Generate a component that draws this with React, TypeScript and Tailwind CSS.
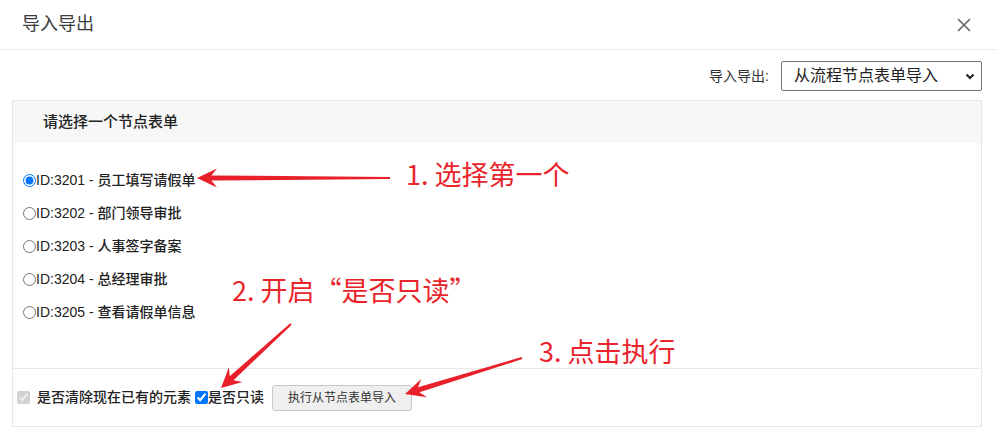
import React from 'react';

type Pt = [number, number];

// tapered annotation arrow: thin tail, swept head
function arrowPoints(tail: Pt, tip: Pt, headLen: number, headHalf: number, tailHalf: number, neckHalf: number) {
  const dx = tip[0] - tail[0];
  const dy = tip[1] - tail[1];
  const len = Math.hypot(dx, dy);
  const ux = dx / len;
  const uy = dy / len;
  const nx = -uy;
  const ny = ux;
  const base: Pt = [tip[0] - ux * headLen, tip[1] - uy * headLen];
  const neck: Pt = [tip[0] - ux * headLen * 0.72, tip[1] - uy * headLen * 0.72];
  const pts: Pt[] = [
    [tail[0] + nx * tailHalf, tail[1] + ny * tailHalf],
    [neck[0] + nx * neckHalf, neck[1] + ny * neckHalf],
    [base[0] + nx * headHalf, base[1] + ny * headHalf],
    tip,
    [base[0] - nx * headHalf, base[1] - ny * headHalf],
    [neck[0] - nx * neckHalf, neck[1] - ny * neckHalf],
    [tail[0] - nx * tailHalf, tail[1] - ny * tailHalf],
  ];
  return pts.map((p) => `${p[0].toFixed(1)},${p[1].toFixed(1)}`).join(' ');
}

const nodes = [
  { id: 3201, name: '员工填写请假单' },
  { id: 3202, name: '部门领导审批' },
  { id: 3203, name: '人事签字备案' },
  { id: 3204, name: '总经理审批' },
  { id: 3205, name: '查看请假单信息' },
];

const sans = "font-['Liberation_Sans','Noto_Sans_CJK_SC',sans-serif]";
const cjk = "font-['Noto_Sans_CJK_SC',sans-serif]";

export default function App() {
  return (
    <div className={`relative h-[435px] w-[997px] overflow-hidden bg-white text-[#333] ${sans}`}>
      {/* header */}
      <div className="flex h-[50px] items-center justify-between border-b border-[#e9ebf0] pl-[22px] pr-[26px]">
        <h4 className="text-[18px] text-[#3c3c3c]">导入导出</h4>
        <svg width="14" height="14" viewBox="0 0 14 14" className="text-[#666]">
          <path d="M1 1 L13 13 M13 1 L1 13" stroke="currentColor" strokeWidth="1.6" />
        </svg>
      </div>

      <div className="pl-[12px] pr-[15px]">
        <div className="mt-[11px] flex h-[30px] items-center justify-end gap-[12px]">
          <span className="text-[14px]">导入导出:</span>
          <div className="relative">
            <select className="h-[30px] w-[201px] appearance-none rounded-[2px] border border-[#767676] bg-white pl-[12px] text-[16px] text-[#222]">
              <option>从流程节点表单导入</option>
            </select>
            <svg width="10" height="7" viewBox="0 0 10 7" className="pointer-events-none absolute right-[7px] top-[12px]">
              <path d="M1.5 1.5 L5 5 L8.5 1.5" fill="none" stroke="#222" strokeWidth="2" />
            </svg>
          </div>
        </div>

        {/* card */}
        <div className="mt-[9px] border border-[#e7e7e7]">
          <div className="flex h-[42px] items-center bg-[#f7f7f7] pl-[30px] text-[15px] font-medium text-[#222]">
            请选择一个节点表单
          </div>
          <div className="pb-[39px] pl-[10px] pt-[21px]">
            {nodes.map((n, i) => (
              <label key={n.id} className="flex h-[33px] items-center text-[14px] font-medium text-[#222]">
                <input type="radio" name="node" defaultChecked={i === 0} className="m-0 h-[13px] w-[13px]" />
                <span>
                  ID:{n.id} - {n.name}
                </span>
              </label>
            ))}
          </div>
          <div className="flex h-[58px] items-center border-t border-[#e7e7e7] pl-[4px] text-[14px] font-medium text-[#222]">
            <input type="checkbox" checked disabled readOnly className="m-0 h-[13px] w-[13px]" />
            <span className="ml-[7px]">是否清除现在已有的元素</span>
            <input type="checkbox" defaultChecked className="ml-[4px] h-[13px] w-[13px]" />
            <span>是否只读</span>
            <button className="ml-[8px] h-[26px] rounded-[3px] border border-[#c8c8c8] bg-[#efefef] px-[15px] text-[12px] font-normal text-[#333]">
              执行从节点表单导入
            </button>
          </div>
        </div>
      </div>

      {/* annotations */}
      <svg className="pointer-events-none absolute inset-0" width="997" height="435">
        <g fill="#e8202a">
          <polygon points={arrowPoints([390, 178], [197, 178], 20, 9.5, 1, 2.5)} />
          <polygon points={arrowPoints([291, 324], [221, 388], 20, 10, 1, 2.8)} />
          <polygon points={arrowPoints([522, 358], [405, 394], 20, 9.5, 1, 2.6)} />
        </g>
      </svg>
      <div className={`absolute left-[406px] top-[156px] text-[27px] leading-[36px] text-[#e9242b] ${cjk}`}>1. 选择第一个</div>
      <div className={`absolute left-[232px] top-[272px] text-[27px] leading-[36px] text-[#e9242b] ${cjk}`}>2. 开启“是否只读”</div>
      <div className={`absolute left-[539px] top-[333px] text-[27px] leading-[36px] text-[#e9242b] ${cjk}`}>3. 点击执行</div>
    </div>
  );
}
